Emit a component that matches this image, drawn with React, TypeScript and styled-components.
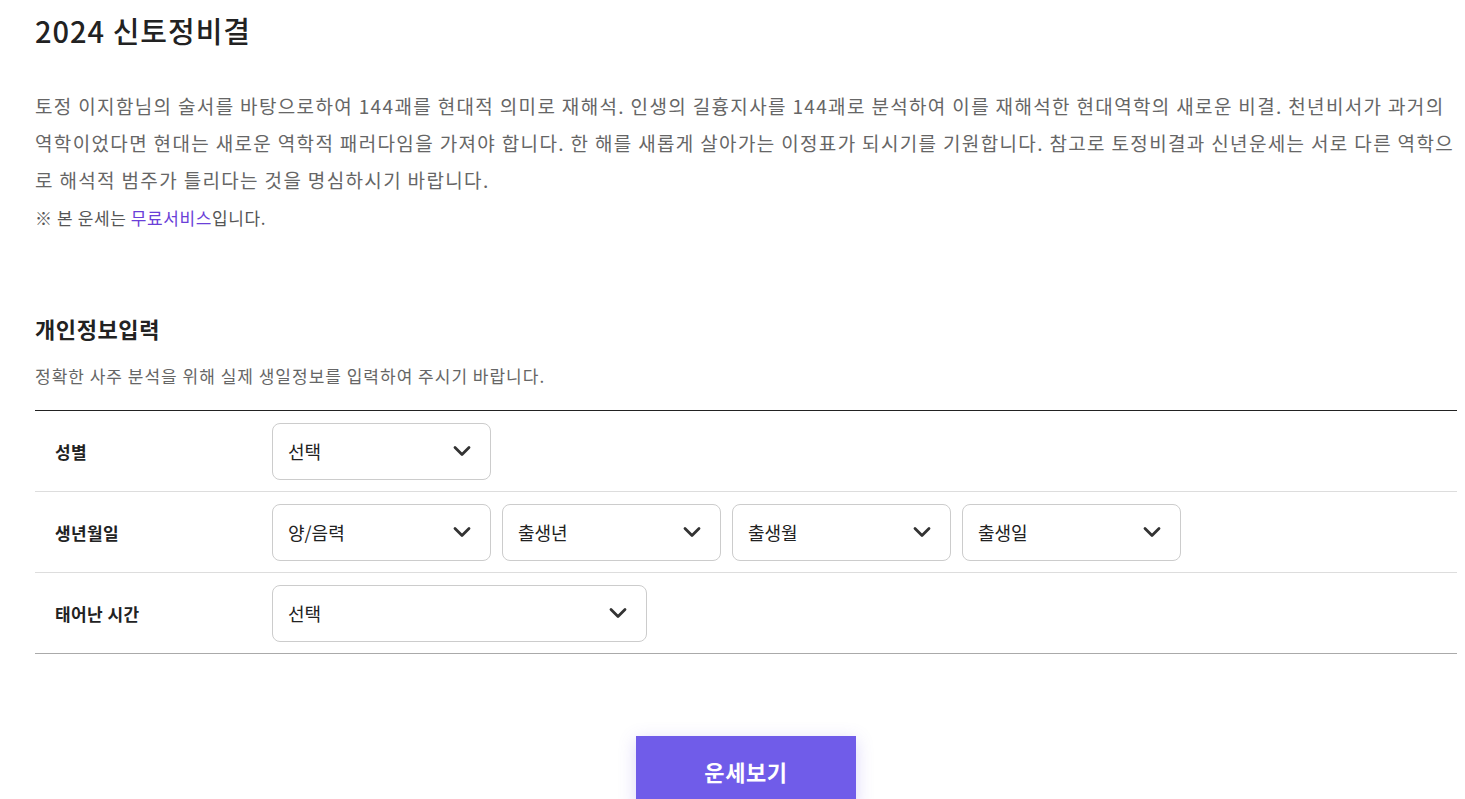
import React from 'react';
import styled, { createGlobalStyle } from 'styled-components';
import { ChevronDown } from 'lucide-react';

const GlobalStyle = createGlobalStyle`
  body {
    margin: 0;
    background: #fff;
    font-family: "Noto Sans CJK KR", "Noto Sans", sans-serif;
    color: #222;
  }
`;

const Page = styled.div`
  padding: 0 8px 0 35px;
`;

const Title = styled.h1`
  margin: 0;
  padding-top: 10px;
  font-size: 29px;
  font-weight: 500;
  line-height: 40px;
  letter-spacing: 1px;
  color: #222;
`;

const Intro = styled.p`
  margin: 37px 0 0;
  font-size: 19px;
  line-height: 37px;
  color: #666;
  letter-spacing: 1.35px;
`;

const Notice = styled.p`
  margin: 7px 0 0;
  font-size: 17px;
  line-height: 26px;
  letter-spacing: 0.6px;
  color: #555;

  em {
    font-style: normal;
    color: #6b3fd8;
  }
`;

const SectionTitle = styled.h2`
  margin: 82px 0 0;
  font-size: 22px;
  font-weight: 700;
  line-height: 30px;
  letter-spacing: 0.6px;
  color: #222;
`;

const SectionDesc = styled.p`
  margin: 21px 0 0;
  font-size: 17px;
  line-height: 24px;
  letter-spacing: 1px;
  color: #666;
`;

const Table = styled.div`
  margin-top: 22px;
  border-top: 1px solid #222;
  border-bottom: 1px solid #aaa;
`;

const Row = styled.div`
  display: grid;
  grid-template-columns: 237px 1fr;
  align-items: center;
  height: 80px;

  & + & {
    border-top: 1px solid #ddd;
  }
`;

const Label = styled.div`
  padding-left: 20px;
  font-size: 17px;
  font-weight: 700;
  letter-spacing: 0.4px;
  color: #222;
`;

const Fields = styled.div`
  display: flex;
  gap: 11px;
`;

const SelectBox = styled.div<{ $width: number }>`
  box-sizing: border-box;
  width: ${p => p.$width}px;
  height: 57px;
  padding: 0 14px 0 15px;
  border: 1px solid #ccc;
  border-radius: 8px;
  display: flex;
  align-items: center;
  justify-content: space-between;
  font-size: 18px;
  color: #222;
  background: #fff;
`;

const ButtonWrap = styled.div`
  display: flex;
  justify-content: center;
  padding-top: 82px;
`;

const SubmitButton = styled.button`
  width: 220px;
  height: 70px;
  border: none;
  background: #705ce9;
  color: #fff;
  font-family: inherit;
  font-size: 22px;
  font-weight: 700;
  letter-spacing: 0.6px;
  box-shadow: 0 4px 16px rgba(112, 92, 233, 0.25);
  cursor: pointer;
`;

const Select: React.FC<{ text: string; width?: number }> = ({ text, width = 219 }) => (
  <SelectBox $width={width}>
    <span>{text}</span>
    <ChevronDown size={28} strokeWidth={2.4} color="#333" />
  </SelectBox>
);

const App: React.FC = () => {
  return (
    <Page>
      <GlobalStyle />
      <Title>2024 신토정비결</Title>
      <Intro>
        토정 이지함님의 술서를 바탕으로하여 144괘를 현대적 의미로 재해석. 인생의 길흉지사를 144괘로 분석하여 이를 재해석한 현대역학의 새로운 비결. 천년비서가 과거의 역학이었다면 현대는 새로운 역학적 패러다임을 가져야 합니다. 한 해를 새롭게 살아가는 이정표가 되시기를 기원합니다. 참고로 토정비결과 신년운세는 서로 다른 역학으로 해석적 범주가 틀리다는 것을 명심하시기 바랍니다.
      </Intro>
      <Notice>
        ※ 본 운세는 <em>무료서비스</em>입니다.
      </Notice>

      <SectionTitle>개인정보입력</SectionTitle>
      <SectionDesc>정확한 사주 분석을 위해 실제 생일정보를 입력하여 주시기 바랍니다.</SectionDesc>

      <Table>
        <Row>
          <Label>성별</Label>
          <Fields>
            <Select text="선택" />
          </Fields>
        </Row>
        <Row>
          <Label>생년월일</Label>
          <Fields>
            <Select text="양/음력" />
            <Select text="출생년" />
            <Select text="출생월" />
            <Select text="출생일" />
          </Fields>
        </Row>
        <Row>
          <Label>태어난 시간</Label>
          <Fields>
            <Select text="선택" width={375} />
          </Fields>
        </Row>
      </Table>

      <ButtonWrap>
        <SubmitButton>운세보기</SubmitButton>
      </ButtonWrap>
    </Page>
  );
};

export default App;
